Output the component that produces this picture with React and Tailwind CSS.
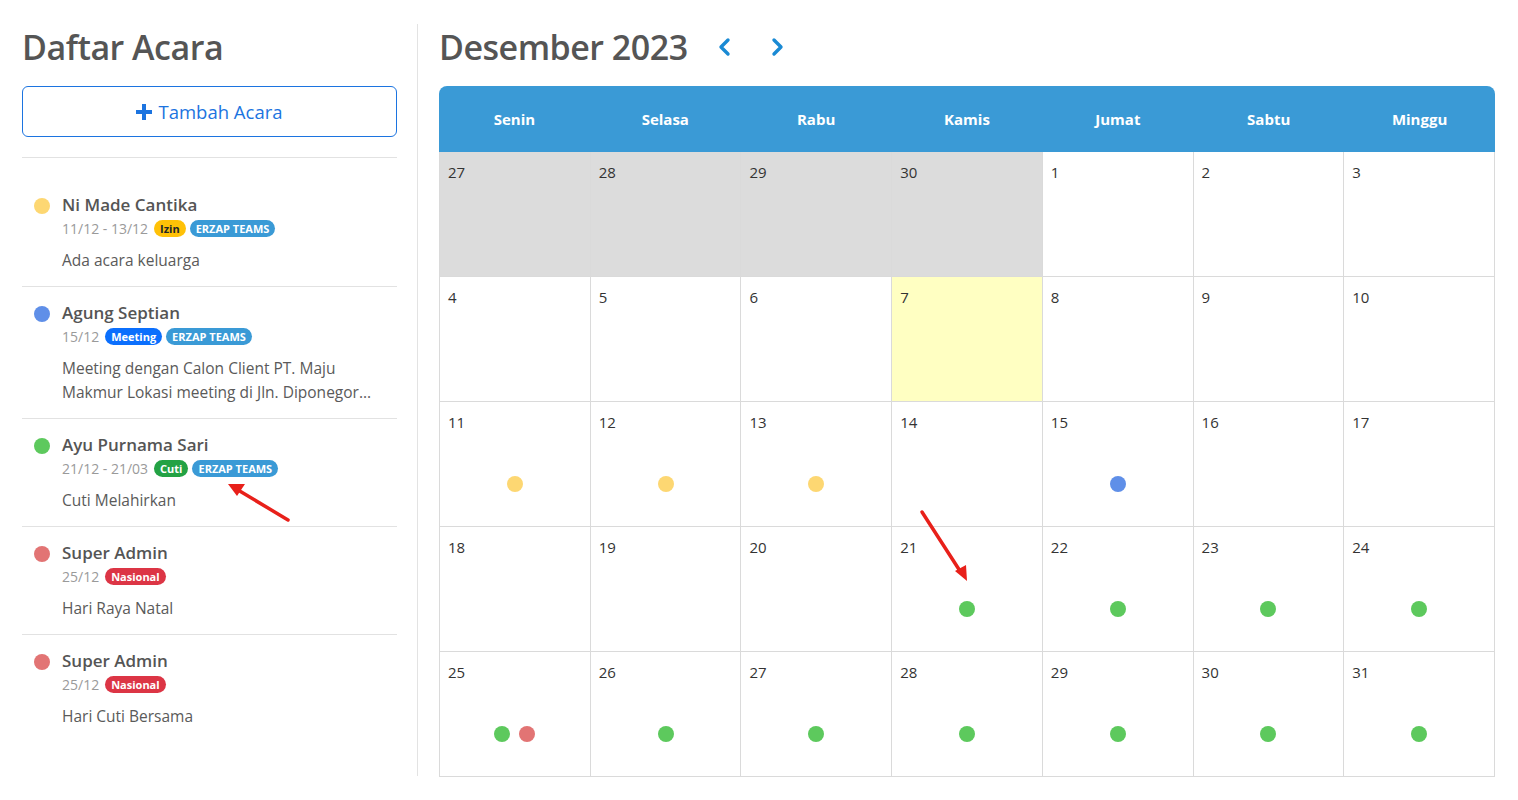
import React from 'react'

const DOT = {
  yellow: 'bg-[#fdd772]',
  blue: 'bg-[#5f8fe8]',
  green: 'bg-[#5dc95d]',
  red: 'bg-[#e27474]',
}

const events = [
  {
    name: 'Ni Made Cantika',
    dot: DOT.yellow,
    date: '11/12 - 13/12',
    badges: [
      { label: 'Izin', cls: 'bg-[#ffc107] text-[#212529]' },
      { label: 'ERZAP TEAMS', cls: 'bg-[#3a9ad6] text-white' },
    ],
    desc: 'Ada acara keluarga',
  },
  {
    name: 'Agung Septian',
    dot: DOT.blue,
    date: '15/12',
    badges: [
      { label: 'Meeting', cls: 'bg-[#0b6ffd] text-white' },
      { label: 'ERZAP TEAMS', cls: 'bg-[#3a9ad6] text-white' },
    ],
    desc: 'Meeting dengan Calon Client PT. Maju Makmur Lokasi meeting di Jln. Diponegor...',
  },
  {
    name: 'Ayu Purnama Sari',
    dot: DOT.green,
    date: '21/12 - 21/03',
    badges: [
      { label: 'Cuti', cls: 'bg-[#23a244] text-white' },
      { label: 'ERZAP TEAMS', cls: 'bg-[#3a9ad6] text-white' },
    ],
    desc: 'Cuti Melahirkan',
  },
  {
    name: 'Super Admin',
    dot: DOT.red,
    date: '25/12',
    badges: [{ label: 'Nasional', cls: 'bg-[#dc3545] text-white' }],
    desc: 'Hari Raya Natal',
  },
  {
    name: 'Super Admin',
    dot: DOT.red,
    date: '25/12',
    badges: [{ label: 'Nasional', cls: 'bg-[#dc3545] text-white' }],
    desc: 'Hari Cuti Bersama',
  },
]

const days = ['Senin', 'Selasa', 'Rabu', 'Kamis', 'Jumat', 'Sabtu', 'Minggu']

// each cell: [day, state, dots]
const weeks = [
  [[27, 'prev'], [28, 'prev'], [29, 'prev'], [30, 'prev'], [1], [2], [3]],
  [[4], [5], [6], [7, 'today'], [8], [9], [10]],
  [[11, null, ['yellow']], [12, null, ['yellow']], [13, null, ['yellow']], [14], [15, null, ['blue']], [16], [17]],
  [[18], [19], [20], [21, null, ['green']], [22, null, ['green']], [23, null, ['green']], [24, null, ['green']]],
  [[25, null, ['green', 'red']], [26, null, ['green']], [27, null, ['green']], [28, null, ['green']], [29, null, ['green']], [30, null, ['green']], [31, null, ['green']]],
]

const EventItem = ({ ev, last }) => (
  <div className={`flex gap-3 px-3 py-[14px] ${last ? '' : 'border-b border-[#e2e2e2]'}`}>
    <div className={`w-4 h-4 rounded-full mt-[5px] shrink-0 ${ev.dot}`}></div>
    <div className="flex-1 min-w-0">
      <p className="text-[17px] leading-6 font-semibold text-[#555]">{ev.name}</p>
      <div className="flex items-center gap-1 h-[22px]">
        <span className="text-[14px] text-[#9a9a9a] mr-[2px]">{ev.date}</span>
        {ev.badges.map((b, i) => (
          <span key={i} className={`text-[11px] leading-none font-bold px-[6px] py-[3px] rounded-full ${b.cls}`}>
            {b.label}
          </span>
        ))}
      </div>
      <p className="mt-[9px] text-[15.5px] leading-6 text-[#5a5a5a]">{ev.desc}</p>
    </div>
  </div>
)

const Chevron = ({ dir }) => (
  <svg width="16" height="20" viewBox="0 0 16 20" fill="none" stroke="#1a8ad4" strokeWidth="3.4" strokeLinecap="round" strokeLinejoin="round">
    {dir === 'left' ? <polyline points="11,3 4,10 11,17" /> : <polyline points="5,3 12,10 5,17" />}
  </svg>
)

const App = () => {
  return (
    <div className="relative w-[1518px] h-[800px] bg-white flex pl-[22px] pt-[24px]" style={{ fontFamily: '"Open Sans", "Liberation Sans", sans-serif' }}>
      {/* left */}
      <div className="w-[375px] shrink-0">
        <h1 className="text-[34px] leading-[46px] font-semibold tracking-[-0.5px] text-[#555]">Daftar Acara</h1>
        <button className="mt-[16px] w-full h-[51px] border border-[#1c74e0] rounded-md flex items-center justify-center gap-[6px] text-[#1c74e0] text-[18.5px]">
          <svg width="16" height="16" viewBox="0 0 16 16"><path d="M6 0h4v6h6v4h-6v6H6v-6H0V6h6z" fill="#1c74e0" /></svg>
          <span>Tambah Acara</span>
        </button>
        <div className="mt-[20px] border-t border-[#e2e2e2]"></div>
        <div className="mt-[21px]">
          {events.map((ev, i) => (
            <EventItem key={i} ev={ev} last={i === events.length - 1} />
          ))}
        </div>
      </div>

      {/* divider */}
      <div className="ml-[20px] mr-[21px] w-px h-[752px] bg-[#e3e3e3]"></div>

      {/* calendar */}
      <div className="w-[1056px]">
        <div className="flex items-center h-[46px]">
          <h2 className="text-[34px] leading-[46px] font-semibold tracking-[-0.5px] text-[#555]">Desember 2023</h2>
          <button className="ml-[29px]"><Chevron dir="left" /></button>
          <button className="ml-[36px]"><Chevron dir="right" /></button>
        </div>
        <div className="mt-[16px]">
          <div className="grid grid-cols-7 h-[66px] bg-[#3a9ad6] rounded-t-lg">
            {days.map((d) => (
              <div key={d} className="flex items-center justify-center text-white text-[15px] font-bold">{d}</div>
            ))}
          </div>
          <div className="border-l border-[#dadada]">
            {weeks.map((w, wi) => (
              <div key={wi} className="grid grid-cols-7 h-[125px] border-b border-[#dadada]">
                {w.map(([n, state, dots], ci) => (
                  <div
                    key={ci}
                    className={`border-r border-[#dadada] px-2 pt-[9px] flex flex-col ${state === 'prev' ? 'bg-[#dcdcdc]' : state === 'today' ? 'bg-[#ffffc2]' : 'bg-white'}`}
                  >
                    <span className="text-[15px] leading-[22px] text-[#333]">{n}</span>
                    {dots && (
                      <div className="mt-[43px] flex justify-center gap-[9px]">
                        {dots.map((c, i) => (
                          <span key={i} className={`w-4 h-4 rounded-full ${DOT[c]}`}></span>
                        ))}
                      </div>
                    )}
                  </div>
                ))}
              </div>
            ))}
          </div>
        </div>
      </div>

      {/* annotation arrows */}
      <svg className="absolute inset-0 pointer-events-none" width="1518" height="800">
        <line x1="288" y1="520" x2="238" y2="490" stroke="#e8201a" strokeWidth="3.5" strokeLinecap="round" />
        <polygon points="228,484 245,484 237,496" fill="#e8201a" />
        <line x1="922" y1="512" x2="960" y2="571" stroke="#e8201a" strokeWidth="3.5" strokeLinecap="round" />
        <polygon points="967,581 955,571 966,565" fill="#e8201a" />
      </svg>
    </div>
  )
}

export default App
